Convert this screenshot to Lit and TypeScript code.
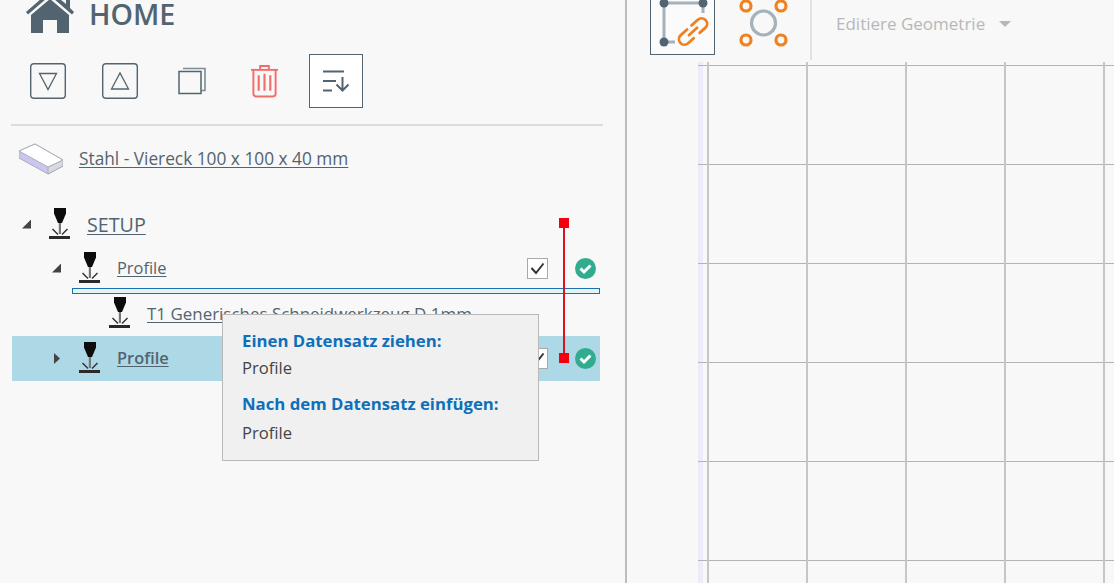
import { LitElement, html, css } from "lit";
import { customElement } from "lit/decorators.js";

const laser = html`<svg class="laser" width="22" height="33" viewBox="0 0 22 33">
  <path d="M5 0H17V5.5L13 15H9L5 5.5Z" fill="#0c0c0c"/>
  <rect x="9.8" y="15" width="2.2" height="11" fill="#777"/>
  <path d="M3.5 21L9 26.5M18.5 21L13 26.5" stroke="#333" stroke-width="1.5" fill="none"/>
  <rect x="0" y="28" width="21" height="3" fill="#2a2a2a"/>
</svg>`;

const check = html`<svg width="21" height="21" viewBox="0 0 21 21" class="ok"><circle cx="10.5" cy="10.5" r="10.5" fill="#32ac8e"/><path d="M5.5 10.5L9 14L15.5 7.5" stroke="#fff" stroke-width="3" fill="none"/></svg>`;

const tick = html`<svg width="15" height="13" viewBox="0 0 15 13" fill="none"><path d="M1.5 6L6 11L13.5 1.5" stroke="#333" stroke-width="2"/></svg>`;

@customElement("app-root")
export class AppRoot extends LitElement {
  static styles = css`
    :host { display: block; width: 1114px; height: 583px; overflow: hidden; background: #f8f8f8; font-family: "Open Sans", "Noto Sans", sans-serif; color: #52646f; }
    .page { display: flex; height: 583px; }
    .left { position: relative; width: 627px; flex: none; box-sizing: border-box; padding: 0 22px 0 11px; border-right: 2px solid #bcbcbc; }
    .home { display: flex; align-items: flex-start; height: 27px; padding-left: 15px; gap: 15px; }
    .home svg { margin-top: -9px; flex: none; }
    .home b { font-size: 28.6px; line-height: 27px; font-weight: 600; color: #52646f; }
    .tools { display: flex; align-items: center; height: 54px; margin-top: 27px; padding-left: 19px; }
    .tb { flex: none; display: flex; }
    .t1 { margin-right: 36px; } .t2 { margin-right: 40px; } .t3 { margin-right: 44px; } .t4 { margin-right: 30px; }
    .sort { width: 54px; height: 54px; box-sizing: border-box; border: 1px solid #52646f; background: #fff; display: flex; align-items: center; justify-content: center; }
    .rule { height: 2px; background: #dcdcdc; margin-top: 16px; }
    a { color: inherit; text-decoration: underline; text-underline-offset: 2px; text-decoration-thickness: 1px; }
    .material { display: flex; align-items: center; height: 44px; margin-top: 11px; padding-left: 8px; gap: 16px; font-size: 17.3px; }
    .material a { margin-bottom: 2px; }
    .tree { margin: 21px 0 0 1px; width: 588px; }
    .row { display: flex; align-items: center; height: 44px; box-sizing: border-box; }
    .r0 { padding-left: 10px; font-size: 19.7px; }
    .r1 { padding-left: 40px; font-size: 16.4px; }
    .r1 a { margin-bottom: 2px; }
    .r2 { padding-left: 97px; font-size: 16.95px; height: 42px; padding-bottom: 3px; }
    .open { flex: none; width: 9px; height: 9px; margin-right: 18px; background: #444; clip-path: polygon(100% 0, 100% 100%, 0 100%); }
    .closed { flex: none; width: 6px; height: 11px; margin: 0 19px 0 2px; background: #444; clip-path: polygon(0 0, 100% 50%, 0 100%); }
    .laser { flex: none; margin-right: 16px; }
    .grow { flex: 1; }
    .box { flex: none; width: 21px; height: 21px; box-sizing: border-box; background: #fff; border: 1px solid #a9a9a9; display: flex; align-items: center; justify-content: center; margin-right: 27px; }
    .ok { flex: none; margin-right: 4px; }
    .drop { height: 6px; margin: -2px 0 0 60px; box-sizing: border-box; border: 1px solid #1b70ad; background: #e2f4fb; }
    .sel { background: #add8e6; height: 45px; }
    .sel a { font-weight: 600; }
    .drag { position: absolute; left: 563px; top: 218px; width: 2px; height: 140px; background: #d8131f; }
    .drag::before, .drag::after { content: ""; position: absolute; left: -4px; width: 10px; height: 10px; background: #f5000c; }
    .drag::before { top: 0; }
    .drag::after { top: 135px; }
    .tip { position: absolute; left: 222px; top: 314px; width: 317px; height: 147px; box-sizing: border-box; padding: 14px 19px; background: #f0f0f0; border: 1px solid #b9b9b9; color: #444; font-size: 16.6px; }
    .tip h4 { margin: 0; font-size: 16.75px; font-weight: 700; color: #0e6fba; line-height: 24px; }
    .tip p { margin: 2px 0 11px; line-height: 26px; }
    .tip p:last-child { margin: 4px 0 0; }
    .right { flex: 1; display: flex; flex-direction: column; min-width: 0; }
    .bar { display: flex; height: 62px; flex: none; align-items: flex-start; }
    .active { flex: none; width: 65px; height: 55px; margin-left: 23px; box-sizing: border-box; background: #fbfbfb; border: 1px solid #52646f; border-top: 0; display: flex; }
    .points { flex: none; margin-left: 23px; display: flex; }
    .sep { width: 2px; height: 60px; background: #e2e2e2; margin-left: 20px; flex: none; }
    .combo { display: flex; align-items: center; height: 47px; margin-left: 24px; gap: 14px; color: #b7b7b7; font-size: 17px; }
    .tri { width: 0; height: 0; border-left: 6px solid transparent; border-right: 6px solid transparent; border-top: 6px solid #b7b7b7; }
    .canvasrow { flex: 1; display: flex; padding-left: 71px; }
    .strip { width: 5px; flex: none; background-color: #ececfa; background-image: repeating-linear-gradient(to bottom, transparent 0 3px, #b4b4b4 3px 4px, transparent 4px 99px); }
    .gridlines { flex: 1; background-image:
        repeating-linear-gradient(to right, transparent 0 4px, #c6c6c6 4px 6px, transparent 6px 99px),
        repeating-linear-gradient(to bottom, transparent 0 3px, #b4b4b4 3px 4px, transparent 4px 99px);
    }
  `;

  render() {
    return html`<div class="page">
      <div class="left">
        <div class="home">
          <svg width="48" height="42" viewBox="0 0 48 42" fill="#52646f"><path d="M0 21L24 0L40 13V8H44V17L48 21L46 23.5L24 4.5L2 23.5Z"/><path d="M5 24L24 8L43 24V42H31V29H17V42H5Z"/></svg>
          <b>HOME</b>
        </div>
        <div class="tools">
          <span class="tb t1"><svg width="36" height="36" viewBox="0 0 36 36" fill="none" stroke="#52646f" stroke-width="1.3"><rect x=".7" y=".7" width="34.6" height="34.6" rx="3" stroke-width="1.4"/><path d="M9.5 10.5H26.5L18 26.5Z"/></svg></span>
          <span class="tb t2"><svg width="36" height="36" viewBox="0 0 36 36" fill="none" stroke="#52646f" stroke-width="1.3"><rect x=".7" y=".7" width="34.6" height="34.6" rx="3" stroke-width="1.4"/><path d="M9.5 26H26.5L18 10Z"/></svg></span>
          <span class="tb t3"><svg width="28" height="28" viewBox="0 0 28 28" fill="none"><path d="M5 1.5H27V23.5H23" stroke="#7d8c96" stroke-width="1.6"/><rect x="1" y="4.5" width="22" height="22" stroke="#52646f" stroke-width="1.5" fill="#f8f8f8"/></svg></span>
          <span class="tb t4"><svg width="29" height="34" viewBox="0 0 30 34" fill="none" stroke="#f56c6c" stroke-width="2"><path d="M1 5.5H29"/><path d="M10.5 5V1.5H19.5V5"/><path d="M3.5 6V30Q3.5 33 6.5 33H23.5Q26.5 33 26.5 30V6"/><path d="M9 11V27M15 9.5V27M21 11V27" stroke-width="2.2"/></svg></span>
          <span class="sort"><svg width="28" height="22" viewBox="0 0 28 22" fill="none" stroke="#52646f" stroke-width="2"><path d="M1 1.5H22M1 11H14M1 20.5H10"/><path d="M20.5 7V20.5M14.5 14.5L20.5 20.5L26.5 14.5"/></svg></span>
        </div>
        <div class="rule"></div>
        <div class="material">
          <svg width="44" height="32" viewBox="0 0 44 32"><path d="M0 8L16 1L44 17V23L29 31L0 15Z" fill="#c9c7f0" stroke="#a9adb8"/><path d="M29 24V31L44 23V17Z" fill="#d9d9e0" stroke="#a9adb8"/><path d="M0 8L16 1L44 17L29 24Z" fill="#fff" stroke="#a9adb8"/></svg>
          <a>Stahl - Viereck 100 x 100 x 40 mm</a>
        </div>
        <div class="tree">
          <div class="row r0"><span class="open"></span>${laser}<a>SETUP</a></div>
          <div class="row r1"><span class="open"></span>${laser}<a>Profile</a><span class="grow"></span>
            <span class="box">${tick}</span>${check}</div>
          <div class="drop"></div>
          <div class="row r2">${laser}<a>T1 Generisches Schneidwerkzeug D 1mm</a></div>
          <div class="row r1 sel"><span class="closed"></span>${laser}<a>Profile</a><span class="grow"></span>
            <span class="box">${tick}</span>${check}</div>
        </div>
        <div class="drag"></div>
        <div class="tip">
          <h4>Einen Datensatz ziehen:</h4><p>Profile</p>
          <h4>Nach dem Datensatz einfügen:</h4><p>Profile</p>
        </div>
      </div>
      <div class="right">
        <div class="bar">
          <span class="active"><svg width="63" height="54" viewBox="0 0 63 54" fill="none">
            <path d="M13 3H52M13 3V42M52 3V13M13 42H24" stroke="#a3b2bb" stroke-width="3"/>
            <circle cx="13" cy="3" r="4.5" fill="#52646f"/><circle cx="52" cy="3" r="4.5" fill="#52646f"/><circle cx="13" cy="42" r="4.5" fill="#52646f"/>
            <g stroke="#ef8220" stroke-width="2.8" fill="none" stroke-linecap="round" transform="rotate(-42 42 31.5)">
              <path d="M39 26H30.5A5.5 5.5 0 0 0 30.5 37H38"/>
              <path d="M46 37H53.5A5.5 5.5 0 0 0 53.5 26H45"/>
              <path d="M36.5 31.5H47.5"/>
            </g></svg></span>
          <span class="points"><svg width="52" height="48" viewBox="0 0 52 48" fill="none">
            <circle cx="25.5" cy="23" r="12" stroke="#a3b2bb" stroke-width="3.2"/>
            <g stroke="#ef8220" stroke-width="3.2"><circle cx="8" cy="6" r="5"/><circle cx="43" cy="6" r="5"/><circle cx="8" cy="40" r="5"/><circle cx="43" cy="40" r="5"/></g></svg></span>
          <span class="sep"></span>
          <span class="combo">Editiere Geometrie <span class="tri"></span></span>
        </div>
        <div class="canvasrow">
          <span class="strip"></span>
          <span class="gridlines"></span>
        </div>
      </div>
    </div>`;
  }
}
